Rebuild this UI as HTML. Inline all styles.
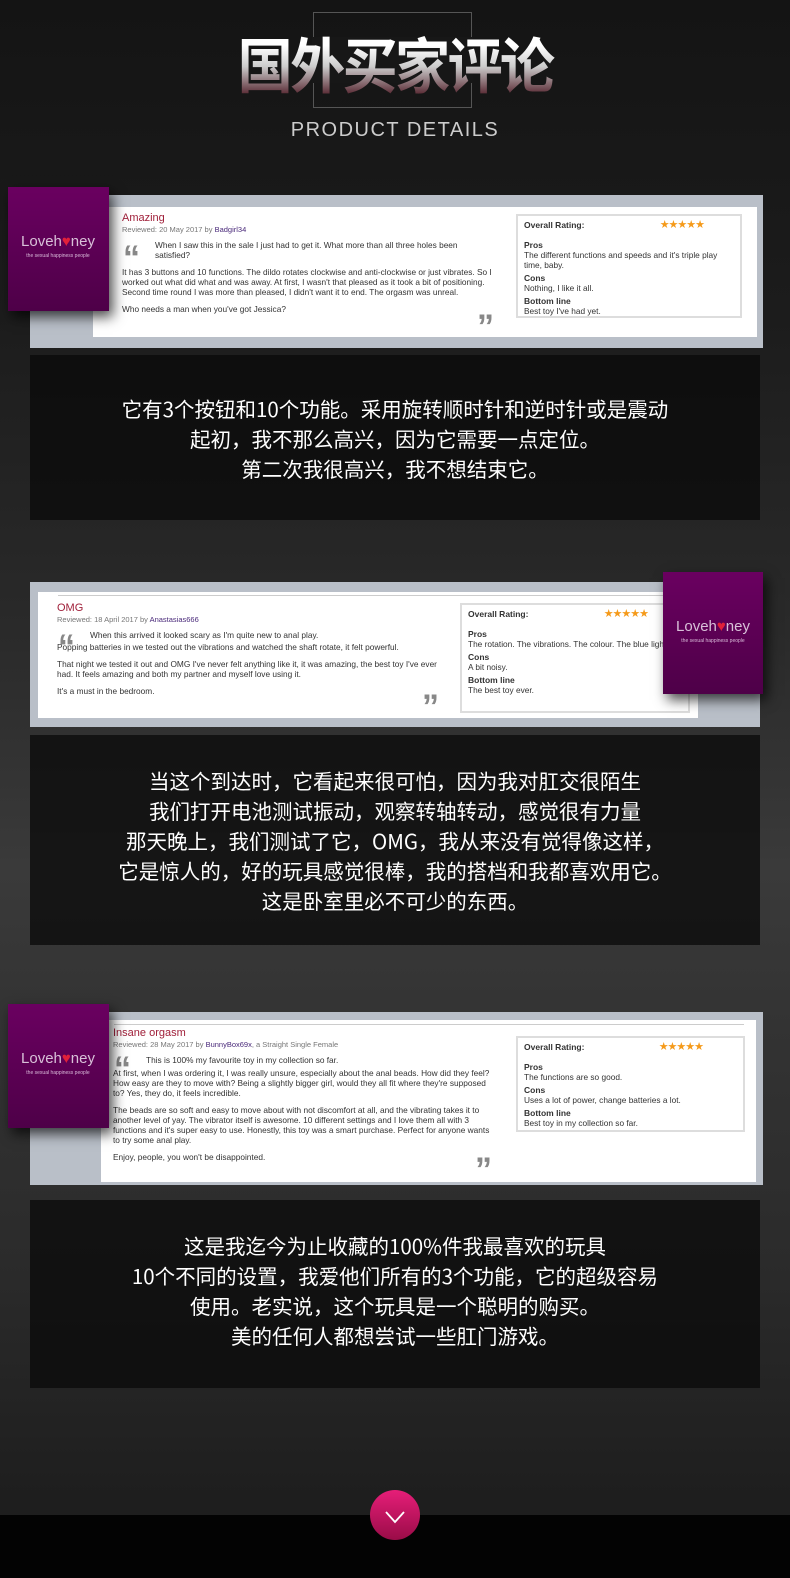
<!DOCTYPE html>
<html><head><meta charset="utf-8"><style>
*{margin:0;padding:0;box-sizing:border-box}
body{width:790px;height:1578px;position:relative;overflow:hidden;font-family:"Liberation Sans",Arial,sans-serif;
background:linear-gradient(180deg,#141414 0%,#1c1c1c 20%,#2a2a2a 40%,#3a3a3a 55%,#333 65%,#2b2b2b 80%,#1e1e1e 95%);}
.abs{position:absolute}
.frame{left:313px;top:12px;width:159px;height:96px;border:1px solid #555}
.frame:before{content:"";position:absolute;left:-2px;right:-2px;top:24px;bottom:24px;background:#171717}
.title{left:0;width:790px;top:28px;text-align:center;font:bold 60px/70px "Noto Sans CJK SC",sans-serif;letter-spacing:-3px;transform:scaleX(0.92);
background:linear-gradient(180deg,#fff 25%,#ccc 55%,#4a1520 100%);-webkit-background-clip:text;color:transparent}
.pd{left:0;width:790px;top:119px;text-align:center;color:#ccc;font-size:20px;letter-spacing:1.5px;font-weight:300}
.grey{background:#b9bfc8}
.white{background:#fff}
.logo{background:linear-gradient(180deg,#6a0060,#4e0048);box-shadow:4px 6px 12px rgba(0,0,0,.7);color:#e8d8e8}
.logo .l{position:absolute;left:5px;width:90px;text-align:center;font-size:15px;color:#d8c0d8}
.logo .s{position:absolute;left:0;width:100px;text-align:center;font-size:5px;color:#d8b8d8}
.rev{font-size:8.3px;color:#333;line-height:10px}
.rev h3{font-size:11px;color:#a0203a;font-weight:normal;margin-bottom:2px}
.rev .by{color:#777;font-size:7.5px;margin-bottom:5px}
.rev .by b{color:#4a2a7a;font-weight:normal}
.rev p{margin-bottom:7px}
.q{font:bold 34px "Liberation Sans",sans-serif;color:#888;position:absolute;line-height:30px}
.rb{border:2px solid #ddd;font-size:8.3px;color:#333;padding:4px 6px;line-height:10px;position:absolute}
.rb b{display:block;font-size:8.5px}
.stars{position:absolute;right:36px;top:4px;color:#f59a1a;font-size:11px;letter-spacing:-1px}
.tb{background:rgba(10,10,10,.75);color:#fff;text-align:center;font:20.5px/30px "Noto Sans CJK SC",sans-serif}
.bot{left:0;top:1515px;width:790px;height:63px;background:#030303}
.circ{left:370px;top:1490px;width:50px;height:50px;border-radius:50%;background:linear-gradient(180deg,#e61e78,#9a0c48)}
</style></head><body>
<div class="abs frame"></div>
<div class="abs title">国外买家评论</div>
<div class="abs pd">PRODUCT DETAILS</div>

<!-- card 1 -->
<div class="abs grey" style="left:30px;top:195px;width:733px;height:153px"></div>
<div class="abs white" style="left:93px;top:207px;width:664px;height:130px"></div>
<div class="abs rev" style="left:122px;top:213px;width:370px">
<h3>Amazing</h3><div class="by">Reviewed: 20 May 2017 by <b>Badgirl34</b></div>
<p style="padding-left:33px">When I saw this in the sale I just had to get it. What more than all three holes been satisfied?</p>
<p>It has 3 buttons and 10 functions. The dildo rotates clockwise and anti-clockwise or just vibrates. So I worked out what did what and was away. At first, I wasn't that pleased as it took a bit of positioning. Second time round I was more than pleased, I didn't want it to end. The orgasm was unreal.</p>
<p>Who needs a man when you've got Jessica?</p></div>
<div class="q" style="left:123px;top:243px">&#8220;</div><div class="q" style="left:477px;top:312px">&#8221;</div>
<div class="rb" style="left:516px;top:214px;width:226px;height:104px">
<b>Overall Rating:</b><span class="stars">★★★★★</span><br><b>Pros</b>The different functions and speeds and it's triple play time, baby.<b style="margin-top:3px">Cons</b>Nothing, I like it all.<b style="margin-top:3px">Bottom line</b>Best toy I've had yet.</div>
<div class="abs logo" style="left:8px;top:187px;width:101px;height:124px"><div class="l" style="top:46px">Loveh<span style="color:#e0203a">♥</span>ney</div><div class="s" style="top:66px">the sexual happiness people</div></div>

<div class="abs tb" style="left:30px;top:355px;width:730px;height:165px;padding-top:38px">它有3个按钮和10个功能。采用旋转顺时针和逆时针或是震动<br>起初，我不那么高兴，因为它需要一点定位。<br>第二次我很高兴，我不想结束它。</div>

<!-- card 2 -->
<div class="abs grey" style="left:30px;top:582px;width:730px;height:145px"></div>
<div class="abs white" style="left:38px;top:592px;width:660px;height:126px"></div>
<div class="abs" style="left:58px;top:595px;width:610px;height:1px;background:#ccc"></div>
<div class="abs rev" style="left:57px;top:603px;width:385px">
<h3>OMG</h3><div class="by">Reviewed: 18 April 2017 by <b>Anastasias666</b></div>
<p style="padding-left:33px;margin-bottom:2px">When this arrived it looked scary as I'm quite new to anal play.</p>
<p>Popping batteries in we tested out the vibrations and watched the shaft rotate, it felt powerful.</p>
<p>That night we tested it out and OMG I've never felt anything like it, it was amazing, the best toy I've ever had. It feels amazing and both my partner and myself love using it.</p>
<p>It's a must in the bedroom.</p></div>
<div class="q" style="left:58px;top:632px">&#8220;</div><div class="q" style="left:422px;top:692px">&#8221;</div>
<div class="rb" style="left:460px;top:603px;width:230px;height:110px">
<b>Overall Rating:</b><span class="stars" style="right:40px">★★★★★</span><br><b>Pros</b>The rotation. The vibrations. The colour. The blue light.<b style="margin-top:3px">Cons</b>A bit noisy.<b style="margin-top:3px">Bottom line</b>The best toy ever.</div>
<div class="abs logo" style="left:663px;top:572px;width:100px;height:122px"><div class="l" style="top:46px">Loveh<span style="color:#e0203a">♥</span>ney</div><div class="s" style="top:66px">the sexual happiness people</div></div>

<div class="abs tb" style="left:30px;top:735px;width:730px;height:210px;padding-top:30px">当这个到达时，它看起来很可怕，因为我对肛交很陌生<br>我们打开电池测试振动，观察转轴转动，感觉很有力量<br>那天晚上，我们测试了它，OMG，我从来没有觉得像这样，<br>它是惊人的，好的玩具感觉很棒，我的搭档和我都喜欢用它。<br>这是卧室里必不可少的东西。</div>

<!-- card 3 -->
<div class="abs grey" style="left:30px;top:1012px;width:733px;height:173px"></div>
<div class="abs white" style="left:101px;top:1020px;width:655px;height:162px"></div>
<div class="abs" style="left:114px;top:1024px;width:630px;height:1px;background:#ccc"></div>
<div class="abs rev" style="left:113px;top:1028px;width:385px">
<h3>Insane orgasm</h3><div class="by">Reviewed: 28 May 2017 by <b>BunnyBox69x</b>, a Straight Single Female</div>
<p style="padding-left:33px;margin-bottom:3px">This is 100% my favourite toy in my collection so far.</p>
<p>At first, when I was ordering it, I was really unsure, especially about the anal beads. How did they feel? How easy are they to move with? Being a slightly bigger girl, would they all fit where they're supposed to? Yes, they do, it feels incredible.</p>
<p>The beads are so soft and easy to move about with not discomfort at all, and the vibrating takes it to another level of yay. The vibrator itself is awesome. 10 different settings and I love them all with 3 functions and it's super easy to use. Honestly, this toy was a smart purchase. Perfect for anyone wants to try some anal play.</p>
<p>Enjoy, people, you won't be disappointed.</p></div>
<div class="q" style="left:114px;top:1054px">&#8220;</div><div class="q" style="left:475px;top:1155px">&#8221;</div>
<div class="rb" style="left:516px;top:1036px;width:229px;height:96px">
<b>Overall Rating:</b><span class="stars" style="right:40px">★★★★★</span><br><b>Pros</b>The functions are so good.<b style="margin-top:3px">Cons</b>Uses a lot of power, change batteries a lot.<b style="margin-top:3px">Bottom line</b>Best toy in my collection so far.</div>
<div class="abs logo" style="left:8px;top:1004px;width:101px;height:124px"><div class="l" style="top:46px">Loveh<span style="color:#e0203a">♥</span>ney</div><div class="s" style="top:66px">the sexual happiness people</div></div>

<div class="abs tb" style="left:30px;top:1200px;width:730px;height:188px;padding-top:30px">这是我迄今为止收藏的100%件我最喜欢的玩具<br>10个不同的设置，我爱他们所有的3个功能，它的超级容易<br>使用。老实说，这个玩具是一个聪明的购买。<br>美的任何人都想尝试一些肛门游戏。</div>

<div class="abs bot"></div>
<div class="abs circ"><svg width="50" height="50" viewBox="0 0 50 50"><path d="M16 22 L25 32 L34 22" stroke="#fff" stroke-width="1.8" fill="none"/></svg></div>
</body></html>
